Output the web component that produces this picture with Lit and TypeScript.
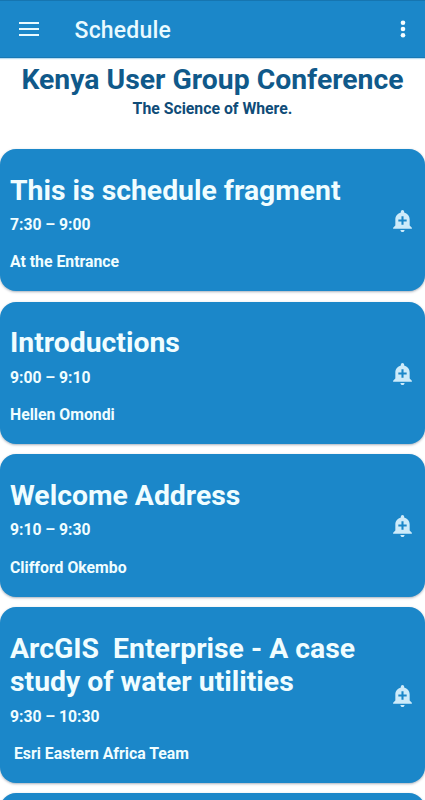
import { LitElement, html, css } from "lit";
import { customElement, property } from "lit/decorators.js";

interface Session {
  title: string;
  time: string;
  place: string;
}

const sessions: Session[] = [
  { title: "This is schedule fragment", time: "7:30 – 9:00", place: "At the Entrance" },
  { title: "Introductions", time: "9:00 – 9:10", place: "Hellen Omondi" },
  { title: "Welcome Address", time: "9:10 – 9:30", place: "Clifford Okembo" },
  {
    title: "ArcGIS  Enterprise - A case\nstudy of water utilities",
    time: "9:30 – 10:30",
    place: " Esri Eastern Africa Team",
  },
  { title: "", time: "", place: "" },
];

@customElement("session-card")
export class SessionCard extends LitElement {
  @property({ attribute: false }) session!: Session;

  static styles = css`
    :host {
      display: flex;
      flex: none;
      align-items: center;
      box-sizing: border-box;
      min-height: 142.2px;
      padding: 24.5px 10px 20px 10px;
      border-radius: 16px;
      background: #1b87c9;
      color: #f0fdff;
      box-shadow: 0 1px 2.5px rgba(0, 30, 60, 0.35);
      font-weight: 700;
    }
    .text {
      flex: 1;
      min-width: 0;
    }
    .title {
      font-size: 28.35px;
      line-height: 33.5px;
      white-space: pre;
    }
    .time {
      margin-top: 8px;
      font-size: 15.7px;
      line-height: 19px;
      white-space: pre;
    }
    .place {
      margin-top: 18.2px;
      font-size: 15.8px;
      line-height: 19px;
      white-space: pre;
    }
    .bell {
      display: block;
      flex: none;
      width: 25px;
      height: 25px;
      margin-top: -4px;
      fill: #cdebfa;
    }
  `;

  render() {
    const s = this.session;
    return html`
      <div class="text">
        <div class="title">${s.title}</div>
        <div class="time">${s.time}</div>
        <div class="place">${s.place}</div>
      </div>
      <svg class="bell" viewBox="0 0 24 24">
        <path d="M10.01 21.01c0 1.1.89 1.99 1.99 1.99s1.99-.89 1.99-1.99h-3.98zm8.87-4.19V11c0-3.25-2.25-5.97-5.29-6.69v-.72C13.59 2.71 12.88 2 12 2s-1.59.71-1.59 1.59v.72C7.37 5.03 5.12 7.75 5.12 11v5.82L3 18.94V20h18v-1.06l-2.12-2.12zM16 13.01h-3v3h-2v-3H8V11h3V8h2v3h3v2.01z" />
      </svg>
    `;
  }
}

@customElement("app-root")
export class AppRoot extends LitElement {
  static styles = css`
    :host {
      display: flex;
      flex-direction: column;
      height: 800px;
      overflow: hidden;
      background: #fff;
      font-family: Roboto, "Liberation Sans", sans-serif;
    }
    .bar {
      display: flex;
      flex: none;
      align-items: center;
      box-sizing: border-box;
      height: 58px;
      padding: 1px 10.5px 0 19px;
      border-top: 1px solid #1675b0;
      border-bottom: 1px solid #1878b4;
      background: #1b87c9;
      color: #e9faff;
      box-shadow: 0 1px 1px rgba(27, 135, 201, 0.3);
    }
    .menu {
      width: 20px;
      height: 14px;
      margin-top: -1px;
      fill: currentColor;
    }
    .name {
      flex: 1;
      margin-left: 35.5px;
      padding-top: 2px;
      font-size: 23px;
      font-weight: 500;
      line-height: 28px;
      letter-spacing: 0.2px;
    }
    .more {
      width: 24px;
      height: 24px;
      margin-top: -1px;
      fill: #f4fcff;
    }
    .heading {
      flex: none;
      height: 91px;
      box-sizing: border-box;
      padding-top: 5px;
      text-align: center;
      font-weight: 700;
      color: #10598a;
      white-space: nowrap;
    }
    .event {
      font-size: 28.35px;
      line-height: 34px;
    }
    .tagline {
      margin-top: 2px;
      font-size: 15.8px;
      line-height: 19px;
      color: #0f4c78;
    }
    .list {
      display: flex;
      flex-direction: column;
      flex: none;
      gap: 10.5px;
    }
  `;

  render() {
    return html`
      <header class="bar">
        <svg class="menu" viewBox="0 0 20 14">
          <rect y="0" width="20" height="2" />
          <rect y="6" width="20" height="2" />
          <rect y="12" width="20" height="2" />
        </svg>
        <div class="name">Schedule</div>
        <svg class="more" viewBox="0 0 24 24">
          <circle cx="12" cy="5.7" r="2.3" />
          <circle cx="12" cy="12" r="2.3" />
          <circle cx="12" cy="18.3" r="2.3" />
        </svg>
      </header>
      <div class="heading">
        <div class="event">Kenya User Group Conference</div>
        <div class="tagline">The Science of Where.</div>
      </div>
      <main class="list">
        ${sessions.map((s) => html`<session-card .session=${s}></session-card>`)}
      </main>
    `;
  }
}
